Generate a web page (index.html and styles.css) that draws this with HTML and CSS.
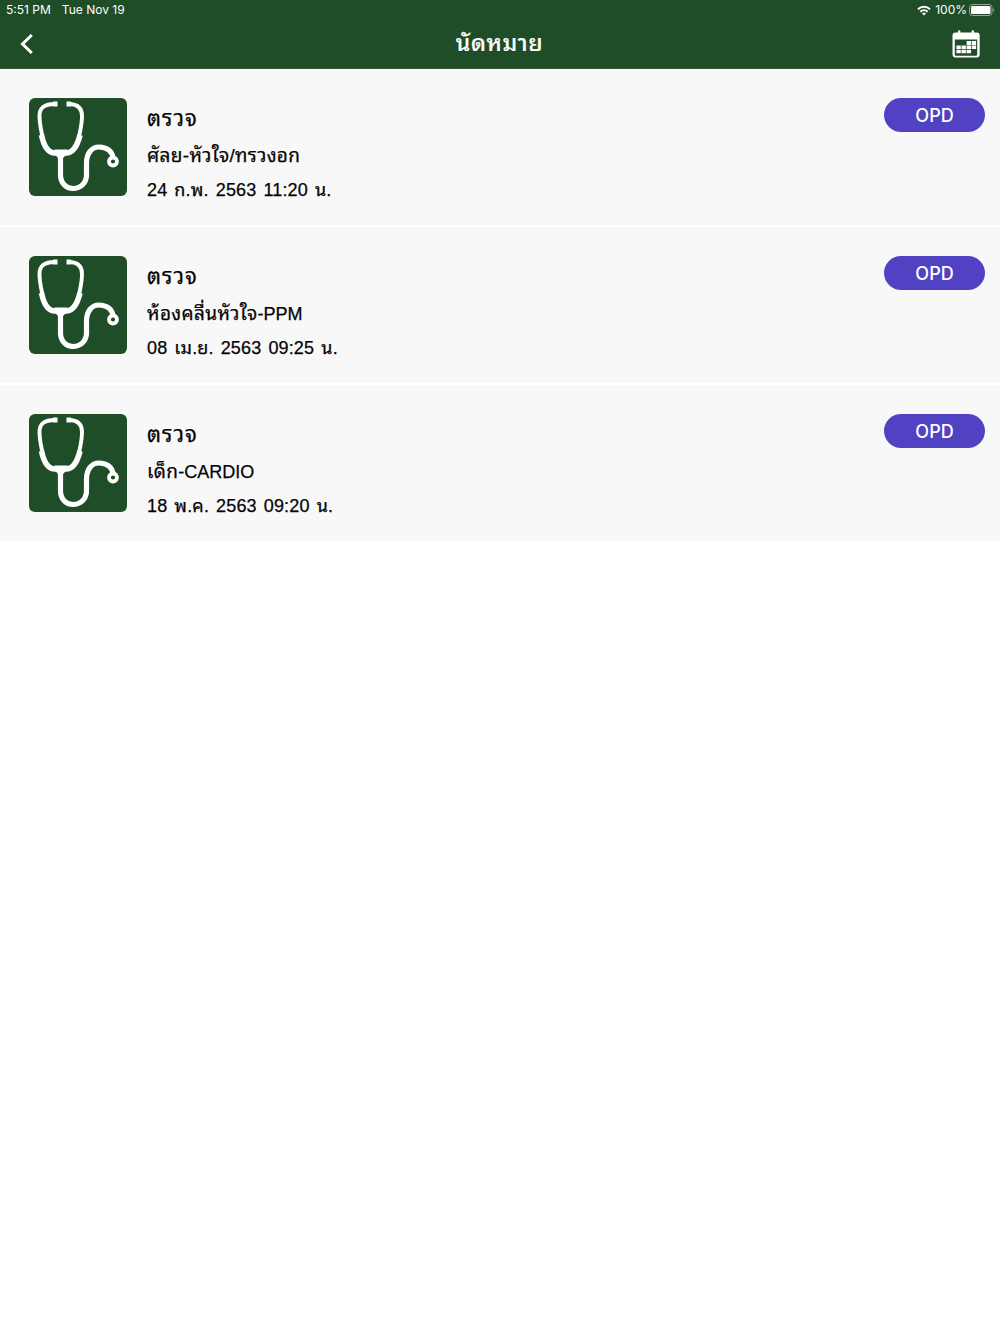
FILE: index.html
```html
<!DOCTYPE html>
<html lang="th">
<head>
  <meta charset="UTF-8">
  <meta name="viewport" content="width=device-width, initial-scale=1.0">
  <title>นัดหมาย</title>
  <link rel="stylesheet" href="styles.css">
</head>
<body>
  <!-- shared icon, used by every appointment row -->
  <svg class="sprite" width="0" height="0">
    <symbol id="stethoscope" viewBox="0 0 98 98">
      <g fill="none" stroke="#fff" stroke-linecap="butt" stroke-linejoin="round">
        <path stroke-width="3.9" d="M26 6C15 6 10.500 10 10.500 18C10.500 26 12 31 13.500 39M41 6C49 6.500 53 10 53 18C53 26 51.500 31 50 39"/>
        <path stroke-width="5.200" d="M24 6h4.500M37.500 6h4.500"/>
        <path stroke-width="5.600" d="M12.500 37C15 49 19 55 26 55H37C44 55 48 49 51 37"/>
        <path stroke-width="5.200" d="M31.500 54V77C31.500 85 37 90.500 44 90.500C51.500 90.500 57.500 85 57.500 77V65C57.500 55 63 49 70 49C78 49 83.500 53.500 84 60"/>
        <circle stroke-width="3.800" cx="84" cy="63.500" r="4"/>
      </g>
      <path fill="#fff" d="M25.500 51.500h13v4l-4.500 4.500h-5l-3.500-4z"/>
    </symbol>
  </svg>

  <header>
    <div class="status-bar">
      <span class="time">5:51 PM</span>
      <span class="date">Tue Nov 19</span>
      <svg class="wifi" width="14" height="11" viewBox="0 0 14 11">
        <g fill="none" stroke="#fff" stroke-width="2">
          <path d="M1 4.300a8.600 8.600 0 0 1 12 0"/>
          <path d="M3.300 6.700a5.300 5.300 0 0 1 7.400 0"/>
        </g>
        <path fill="#fff" d="M5 8.500a2.900 2.900 0 0 1 4 0L7 10.500z"/>
      </svg>
      <span class="percent">100%</span>
      <svg class="battery" width="26" height="12" viewBox="0 0 26 12">
        <rect x=".5" y=".5" width="22.500" height="11" rx="3" fill="none" stroke="#8fa893"/>
        <rect x="2" y="2" width="19.500" height="8" rx="1.500" fill="#fff"/>
        <path fill="#8fa893" d="M24 4.200c1.700.6 1.700 3 0 3.600z"/>
      </svg>
    </div>
    <nav>
      <svg class="back" width="16" height="22" viewBox="0 0 16 22">
        <path d="M12.800 2L3.500 11L12.800 20" fill="none" stroke="#fff" stroke-width="3"/>
      </svg>
      <h1>นัดหมาย</h1>
      <svg class="calendar" width="28" height="28" viewBox="0 0 28 28">
        <path fill="#fff" fill-rule="evenodd" d="M6 2.500V1.400a1.200 1.200 0 0 1 2.400 0V2.500h11.200V1.400a1.200 1.200 0 0 1 2.400 0V2.500h2.700a3 3 0 0 1 3 3v19a3 3 0 0 1-3 3H3.500a3 3 0 0 1-3-3v-19a3 3 0 0 1 3-3zM2.800 9.500v15a1.300 1.300 0 0 0 1.300 1.300h19.800a1.300 1.300 0 0 0 1.300-1.300v-15z"/>
        <g fill="#fff">
          <path d="M14.600 11h4.400v3.900h-4.400zM19.700 11h4.400v3.900h-4.400z"/>
          <path d="M4.400 15.500h4.400v3.600h-4.400zM9.500 15.500h4.400v3.600h-4.400zM14.600 15.500h4.400v3.600h-4.400zM19.700 15.500h4.400v3.600h-4.400z"/>
          <path d="M4.400 19.700h4.400v3.600h-4.400zM9.500 19.700h4.400v3.600h-4.400zM14.600 19.700h4.400v3.600h-4.400z"/>
        </g>
      </svg>
    </nav>
  </header>

  <main class="appointments">
    <div class="appointment">
      <div class="thumb"><svg width="98" height="98"><use href="#stethoscope"/></svg></div>
      <div class="info">
        <h2>ตรวจ</h2>
        <p class="clinic"><span>ศัลย-หัวใจ/ทรวงอก</span></p>
        <p class="datetime">24 ก.พ. 2563 11:20 น.</p>
      </div>
      <span class="badge">OPD</span>
    </div>

    <div class="appointment">
      <div class="thumb"><svg width="98" height="98"><use href="#stethoscope"/></svg></div>
      <div class="info">
        <h2>ตรวจ</h2>
        <p class="clinic"><span>ห้องคลื่นหัวใจ</span>-PPM</p>
        <p class="datetime">08 เม.ย. 2563 09:25 น.</p>
      </div>
      <span class="badge">OPD</span>
    </div>

    <div class="appointment">
      <div class="thumb"><svg width="98" height="98"><use href="#stethoscope"/></svg></div>
      <div class="info">
        <h2>ตรวจ</h2>
        <p class="clinic"><span>เด็ก</span>-CARDIO</p>
        <p class="datetime">18 พ.ค. 2563 09:20 น.</p>
      </div>
      <span class="badge">OPD</span>
    </div>
  </main>
</body>
</html>
```
FILE: styles.css
```css
:root {
  --primary-color: #1e4d27;
  --badge-color: #5142c4;
  --row-bg: #f8f8f8;
}

* {
  box-sizing: border-box;
}

body {
  margin: 0;
  background: white;
  color: #050505;
  font-family: "Liberation Sans", "Noto Sans Thai Looped", "Noto Looped Thai", "Loma", "Waree", "Garuda", "FreeSans", "Noto Serif Thai", sans-serif;
}

.sprite {
  display: block;
}

header {
  height: 69px;
  background: var(--primary-color);
  border-bottom: 1px solid #33603b;
  color: white;
}

.status-bar {
  display: flex;
  align-items: center;
  height: 20px;
  padding: 0 5px 0 6px;
  font-family: Inter, sans-serif;
  font-size: 12px;
  line-height: 20px;
}

.date {
  margin-left: 11px;
}

.wifi {
  margin-left: auto;
}

.percent {
  margin: 0 2px 0 4px;
}

nav {
  display: grid;
  grid-template-columns: 28px 1fr 28px;
  align-items: center;
  height: 48px;
  padding: 0 20px 0 19px;
}

h1 {
  margin: 0 0 3px;
  font-size: 23px;
  line-height: 40px;
  font-weight: 500;
  letter-spacing: 0.6px;
  text-align: center;
  -webkit-text-stroke: 0.2px;
}

.appointments {
  display: grid;
  gap: 2px;
}

.appointment {
  display: flex;
  align-items: flex-start;
  height: 156px;
  padding: 29px 15px 0 29px;
  background: var(--row-bg);
}

.thumb {
  height: 98px;
  border-radius: 6px;
  background: var(--primary-color);
}

.info {
  flex: 1;
  padding: 3px 0 0 20px;
  -webkit-text-stroke: 0.25px;
}

.info h2,
.info p {
  margin: 0;
  height: 36px;
  line-height: 36px;
  font-weight: normal;
  white-space: nowrap;
}

.info h2 {
  font-size: 22px;
  letter-spacing: 1px;
}

.info p {
  font-size: 18px;
}

.info .clinic {
  line-height: 38px;
}

.clinic span {
  font-size: 19px;
  letter-spacing: 0.35px;
}

.info .datetime {
  height: 34px;
  line-height: 34px;
  letter-spacing: 0.15px;
  word-spacing: 1.9px;
}

.badge {
  width: 101px;
  height: 34px;
  border-radius: 17px;
  background: var(--badge-color);
  color: white;
  font-family: Inter, sans-serif;
  font-size: 18px;
  font-weight: 500;
  line-height: 35px;
  text-align: center;
}
```
